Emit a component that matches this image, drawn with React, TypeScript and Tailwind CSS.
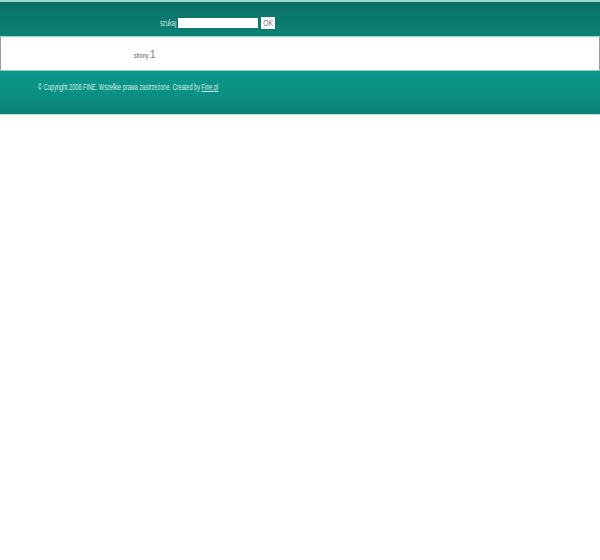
export default function App() {
  return (
    <div className="w-[600px] bg-white" style={{ fontFamily: '"Liberation Sans", Arial, sans-serif' }}>
      <div className="h-[2px] bg-[#9fd6cf]" />
      <div className="flex h-[34px] items-start bg-gradient-to-b from-[#0b6f65] to-[#0c8174] pl-[160px] pt-[15px]">
        <span className="mt-[1px] w-[18px] shrink-0 whitespace-nowrap text-[9.5px] leading-none text-[#cfe9e5]">
          <span className="inline-block origin-left scale-x-[0.6]">szukaj</span>
        </span>
        <input className="mt-[1px] h-[10px] w-[80px] border-0 bg-white outline-none" />
        <button className="ml-[3px] flex h-[12px] w-[14px] items-center justify-center bg-white text-[8.5px] leading-none text-[#777]">
          <span className="inline-block scale-x-[0.8]">OK</span>
        </button>
      </div>
      <div className="h-px bg-[#8fd3cb]" />
      <div className="flex h-[33px] items-center border-x border-[#9a9a9a] pl-[133px] pt-[3px] leading-none">
        <span className="w-[16px] whitespace-nowrap text-[7px] text-[#555]">
          <span className="inline-block origin-left scale-x-[0.75]">strony:</span>
        </span>
        <span className="text-[10px] text-[#777]">1</span>
      </div>
      <div className="h-px bg-[#8fd3cb]" />
      <div className="h-[43px] bg-gradient-to-b from-[#0a978a] via-[#0a9184] to-[#0b7f73] pl-[38px] pt-[12px]">
        <div className="origin-left scale-x-[0.62] whitespace-nowrap text-[9px] leading-none text-[#d8efec]">
          © Copyright 2008 FINE. Wszelkie prawa zastrzeżone. Created by{" "}
          <a href="#" className="underline">Fine.pl</a>
        </div>
      </div>
      <div className="h-px bg-[#b9e3de]" />
      <div className="h-[445px]" />
    </div>
  );
}
